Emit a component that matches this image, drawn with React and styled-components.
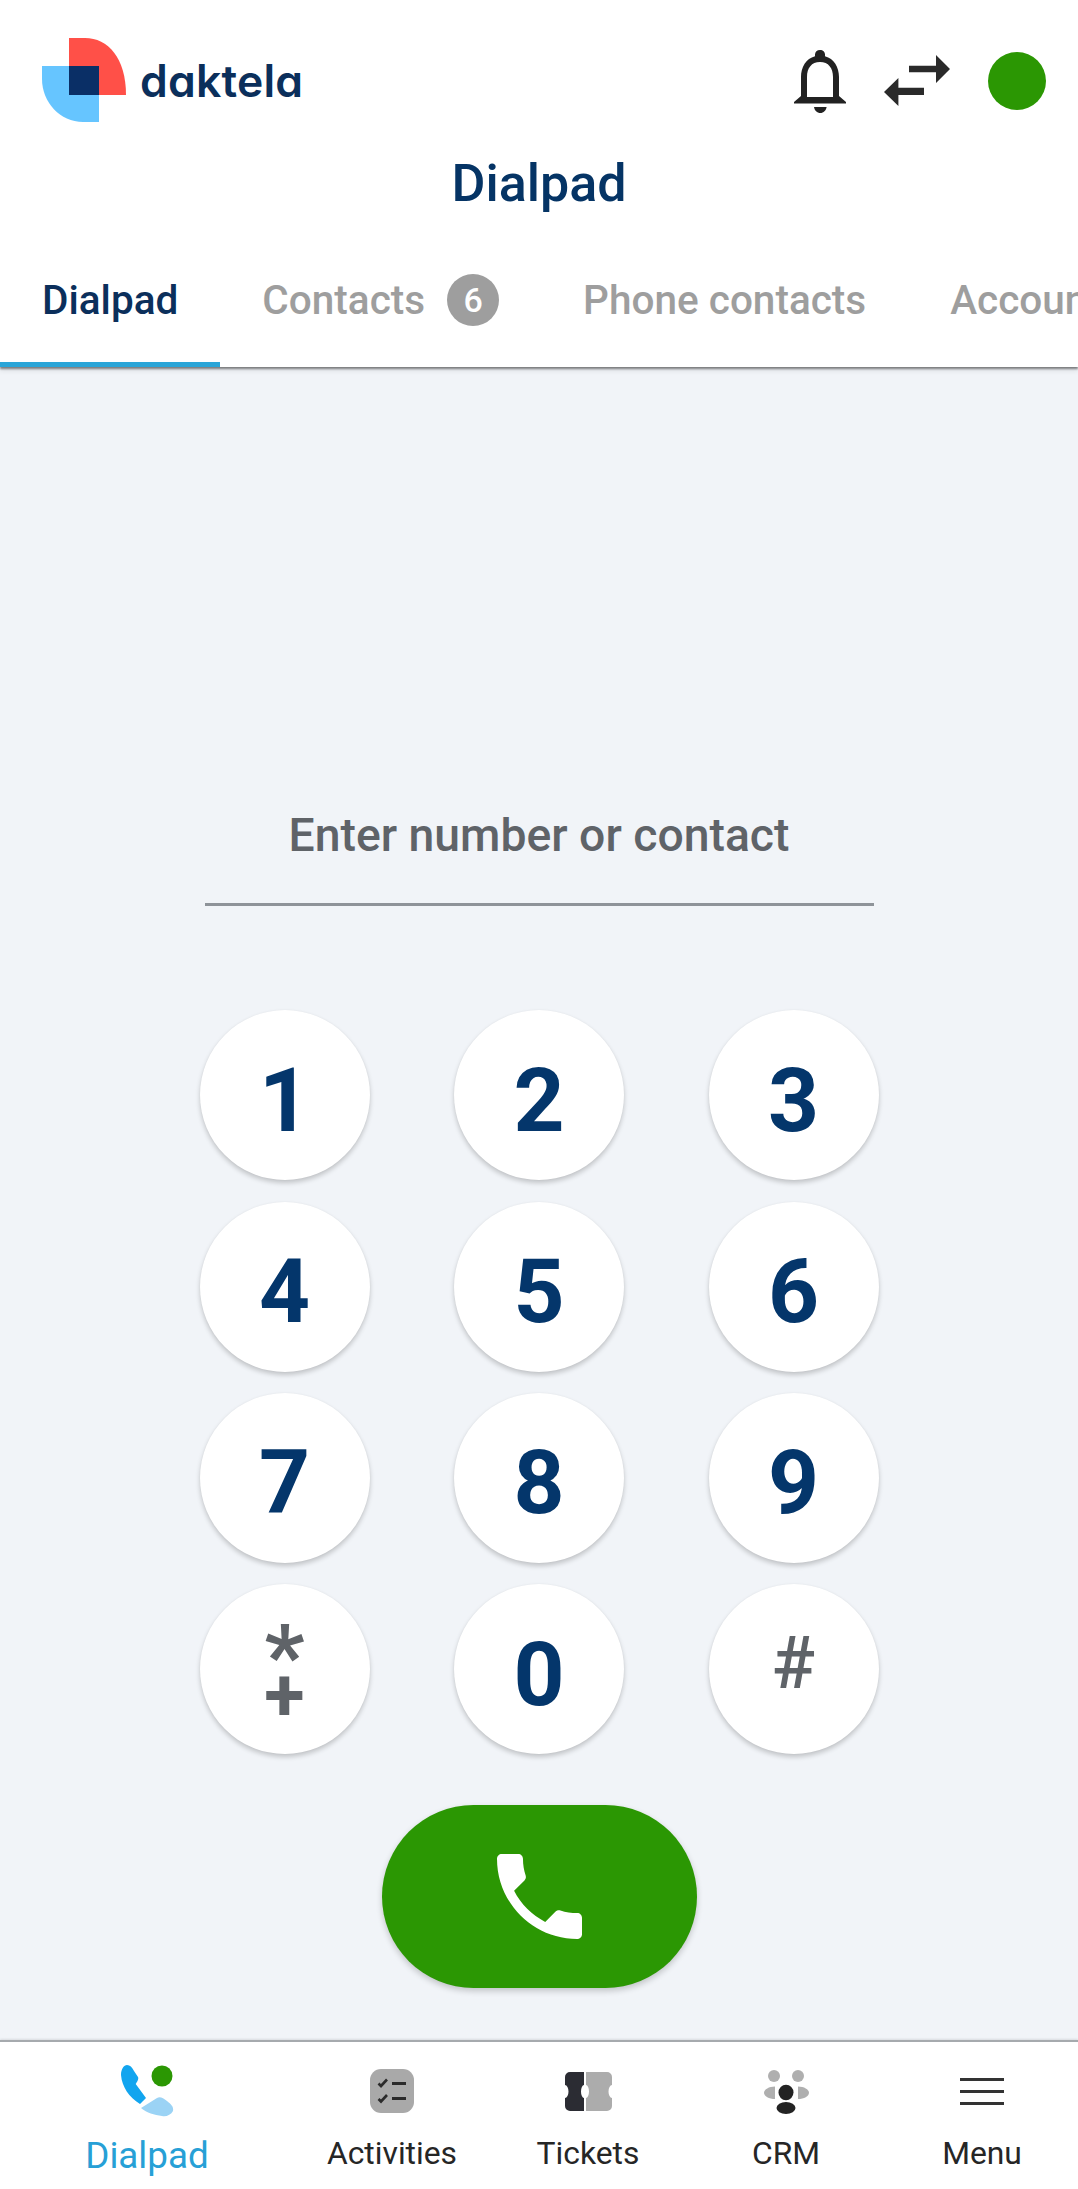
import React from "react";
import styled, { createGlobalStyle } from "styled-components";

const Global = createGlobalStyle`
  html, body { margin: 0; padding: 0; background: #fff; }
  * { box-sizing: border-box; }
`;

const Page = styled.div`
  width: 1078px;
  height: 2189px;
  display: flex;
  flex-direction: column;
  overflow: hidden;
  background: #fff;
  font-family: Roboto, "Liberation Sans", sans-serif;
`;
const Header = styled.header`
  height: 156px;
  padding: 38px 32px 0 42px;
  display: flex;
  justify-content: space-between;
  align-items: flex-start;
`;
const Brand = styled.div`
  display: flex;
  align-items: flex-start;
  gap: 14px;
`;
const Wordmark = styled.span`
  font-family: Inter, sans-serif;
  font-feature-settings: "cv11" 1;
  font-size: 44.5px;
  font-weight: 600;
  line-height: 42px;
  letter-spacing: 0.2px;
  margin-top: 22px;
  color: #0b2f5b;
`;
const Actions = styled.div`
  display: flex;
  align-items: flex-start;
  gap: 38px;
  padding-top: 12px;
`;
const IconSlot = styled.span`
  display: block;
  line-height: 0;
  margin-top: ${(p) => p.$top}px;
`;
const Status = styled.span`
  display: block;
  width: 58px;
  height: 58px;
  border-radius: 50%;
  background: #2b9703;
  margin-top: 2px;
`;
const Title = styled.h1`
  margin: 0;
  height: 68px;
  position: relative;
  z-index: 2;
  background: #fff;
  font-size: 52px;
  line-height: 56px;
  font-weight: 500;
  text-align: center;
  color: #053465;
`;
const Tabs = styled.nav`
  height: 143px;
  display: flex;
  align-items: stretch;
  overflow: hidden;
  background: #fff;
  position: relative;
  z-index: 1;
  box-shadow: 0 2px 2px rgba(0, 0, 0, 0.45), 0 4px 5px rgba(0, 0, 0, 0.08);
`;
const Tab = styled.div`
  flex: none;
  padding: 14px 42px 0;
  display: flex;
  align-items: center;
  gap: 22px;
  height: 100%;
  font-size: 40.5px;
  font-weight: 500;
  color: ${(p) => (p.$active ? "#0b2f5b" : "#9e9e9e")};
  border-bottom: 5px solid ${(p) => (p.$active ? "#2aa5d8" : "transparent")};
  white-space: nowrap;
`;
const Badge = styled.span`
  width: 52px;
  height: 52px;
  border-radius: 50%;
  background: #9e9e9e;
  color: #fff;
  font-size: 34px;
  font-weight: 500;
  display: flex;
  align-items: center;
  justify-content: center;
`;
const Main = styled.main`
  flex: 1;
  background: #f1f4f8;
  display: flex;
  flex-direction: column;
  align-items: center;
  justify-content: flex-end;
  padding-bottom: 52px;
`;
const NumberField = styled.div`
  width: 669px;
  height: 106px;
  margin-bottom: 104px;
  border-bottom: 3px solid #8e9399;
  color: #5f6368;
  font-size: 46.3px;
  font-weight: 500;
  text-align: center;
  line-height: 70px;
`;
const Keypad = styled.div`
  display: grid;
  grid-template-columns: repeat(3, 170px);
  grid-auto-rows: 170.8px;
  column-gap: 84.5px;
  row-gap: 20.5px;
`;
const Key = styled.button`
  width: 170px;
  height: 170px;
  padding: 10px 0 0;
  border: 0;
  border-radius: 50%;
  background: #fff;
  box-shadow: 0 3px 5px rgba(0, 0, 0, 0.2), 0 0 2px rgba(0, 0, 0, 0.04);
  font-family: inherit;
  font-size: 89px;
  line-height: 1;
  font-weight: 700;
  color: #04366b;
`;
const HashKey = styled(Key)`
  font-size: 72px;
  font-weight: 500;
  color: #5f6368;
  padding: 0 0 10px;
`;
const StarKey = styled(Key)`
  padding-top: 12px;
  color: #5f6368;
`;
const StarGlyphs = styled.span`
  display: block;
  font-size: 74px;
  line-height: 39px;
  white-space: pre-line;
  &::first-line {
    font-size: 88px;
  }
`;
const CallButton = styled.button`
  width: 315px;
  height: 183px;
  margin-top: 50px;
  border: 0;
  border-radius: 92px;
  background: #2b9703;
  box-shadow: 0 3px 6px rgba(0, 0, 0, 0.2);
  display: flex;
  align-items: center;
  justify-content: center;
`;
const BottomNav = styled.nav`
  height: 149px;
  position: relative;
  z-index: 1;
  background: #fff;
  border-top: 2px solid #a6aaae;
  box-shadow: 0 -1px 2px rgba(0, 0, 0, 0.1);
  display: grid;
  grid-template-columns: 294px 196px 196px 200px 192px;
  padding-top: 19px;
`;
const NavItem = styled.div`
  display: flex;
  flex-direction: column;
  align-items: center;
  color: ${(p) => (p.$active ? "#27a0d6" : "#262626")};
  font-size: ${(p) => (p.$active ? 36.8 : 31.8)}px;
`;
const NavIcon = styled.div`
  height: 60px;
  display: flex;
  align-items: center;
  justify-content: center;
`;
const NavLabel = styled.span`
  margin-top: ${(p) => (p.$active ? 14 : 11)}px;
  line-height: 42px;
  white-space: nowrap;
`;

const Logo = () => (
  <svg width="84" height="84" viewBox="0 0 84 84" aria-hidden="true">
    <path d="M27 0H43C66 0 84 20 84 57H27Z" fill="#ff5048" />
    <path d="M0 28H57V84H41C18 84 0 64 0 41Z" fill="#66c5ff" />
    <rect x="27" y="28" width="30" height="29" fill="#0a2f66" />
  </svg>
);
const Bell = () => (
  <svg width="52" height="63" viewBox="0 0 52 63" aria-hidden="true">
    <path
      fill="#222"
      fillRule="evenodd"
      d="M26 0c3 0 5 2 5 4.600v1.600C40 8.600 45 17 45 27v19l7 6v1.500H0V52l7-6V27C7 17 12 8.600 21 6.200V4.600C21 2 23 0 26 0zM13 47h26V27c0-9-4.500-15-13-15s-13 6-13 15z"
    />
    <path fill="#222" d="M20 57h12.600C32 60.500 29.500 63 26.300 63S20.500 60.500 20 57z" />
  </svg>
);
const Swap = () => (
  <svg width="66" height="51" viewBox="0 0 66 51" aria-hidden="true">
    <path fill="#2a2a2a" d="M25 10.700h27V0l14 14-14 14V17.300H25z" />
    <path fill="#2a2a2a" d="M40 32.700H14.400V23L0 37l14.400 14V40H40z" />
  </svg>
);
const Phone = () => (
  <svg width="85" height="85" viewBox="3 3 18 18" aria-hidden="true">
    <path
      fill="#fff"
      d="M6.620 10.790c1.440 2.830 3.760 5.140 6.590 6.590l2.200-2.200c.27-.27.67-.36 1.020-.24 1.120.37 2.330.57 3.570.57.55 0 1 .45 1 1V20c0 .55-.45 1-1 1-9.390 0-17-7.610-17-17 0-.55.45-1 1-1h3.500c.55 0 1 .45 1 1 0 1.250.2 2.450.57 3.570.11.35.03.74-.25 1.020l-2.200 2.200z"
    />
  </svg>
);
const DialpadIcon = () => (
  <svg width="60" height="60" viewBox="0 0 60 60" aria-hidden="true">
    <path
      fill="#12a5ef"
      d="M4 14C4 8 7 4 10 4c3 0 5 2 7 6l4 6c1 2-1 5-2.300 7L29 37l-6 6C12 36 5 26 4 14z"
    />
    <path
      fill="#9bd3f5"
      d="M24 47l16-10c3-2 6 0 10 3 4 3 7 6 6 10-2 4-7 6-11 5-8-1-15-3-21-8z"
    />
    <circle cx="45" cy="15" r="10.500" fill="#2b9703" />
  </svg>
);
const ActivitiesIcon = () => (
  <svg width="44" height="44" viewBox="0 0 44 44" aria-hidden="true">
    <rect width="44" height="44" rx="11" fill="#a9a9a9" />
    <path
      d="M8.500 14.500l2.500 2.500 6-6.500M8.500 30l2.500 2.500 6-6.500"
      fill="none"
      stroke="#2b2b2b"
      strokeWidth="2.600"
    />
    <path d="M22 14.500h14M22 29.500h14" fill="none" stroke="#2b2b2b" strokeWidth="3" />
  </svg>
);
const TicketsIcon = () => (
  <svg width="47" height="39" viewBox="0 0 47 39" aria-hidden="true">
    <path
      fill="#2b2c33"
      d="M5 0H19V13A3 6.500 0 0 0 19 26V39H5A5 5 0 0 1 0 34V26A3.500 6.500 0 0 0 0 13V5A5 5 0 0 1 5 0Z"
    />
    <path
      fill="#acacac"
      d="M21 0H42A5 5 0 0 1 47 5V13A3.500 6.500 0 0 0 47 26V34A5 5 0 0 1 42 39H21V26A3 6.500 0 0 0 21 13Z"
    />
  </svg>
);
const CrmIcon = () => (
  <svg width="45" height="45" viewBox="0 0 45 45" aria-hidden="true">
    <circle cx="10" cy="7" r="6" fill="#afafaf" />
    <circle cx="34" cy="7" r="6" fill="#afafaf" />
    <path fill="#afafaf" d="M11 17.500V30C5 30 0 27 0 23.700 0 20.500 5 17.500 11 17.500z" />
    <path fill="#afafaf" d="M34 17.500V30c6 0 11-3 11-6.300 0-3.200-5-6.200-11-6.200z" />
    <ellipse cx="22" cy="23.500" rx="7.500" ry="7.800" fill="#232323" />
    <ellipse cx="22" cy="39" rx="9.500" ry="6" fill="#232323" />
  </svg>
);
const MenuIcon = () => (
  <svg width="44" height="27" viewBox="0 0 44 27" aria-hidden="true">
    <path d="M0 1.500h44M0 13.500h44M0 25.500h44" fill="none" stroke="#333" strokeWidth="3.200" />
  </svg>
);

const digits = ["1", "2", "3", "4", "5", "6", "7", "8", "9"];

export default function App() {
  return (
    <Page>
      <Global />
      <Header>
        <Brand>
          <Logo />
          <Wordmark>daktela</Wordmark>
        </Brand>
        <Actions>
          <IconSlot $top={0}>
            <Bell />
          </IconSlot>
          <IconSlot $top={5}>
            <Swap />
          </IconSlot>
          <Status />
        </Actions>
      </Header>
      <Title>Dialpad</Title>
      <Tabs>
        <Tab $active>Dialpad</Tab>
        <Tab>
          Contacts <Badge>6</Badge>
        </Tab>
        <Tab>Phone contacts</Tab>
        <Tab>Accounts</Tab>
      </Tabs>
      <Main>
        <NumberField>Enter number or contact</NumberField>
        <Keypad>
          {digits.map((d) => (
            <Key key={d}>{d}</Key>
          ))}
          <StarKey>
            <StarGlyphs>{"*\n+"}</StarGlyphs>
          </StarKey>
          <Key>0</Key>
          <HashKey>#</HashKey>
        </Keypad>
        <CallButton aria-label="Call">
          <Phone />
        </CallButton>
      </Main>
      <BottomNav>
        <NavItem $active>
          <NavIcon>
            <DialpadIcon />
          </NavIcon>
          <NavLabel $active>Dialpad</NavLabel>
        </NavItem>
        <NavItem>
          <NavIcon>
            <ActivitiesIcon />
          </NavIcon>
          <NavLabel>Activities</NavLabel>
        </NavItem>
        <NavItem>
          <NavIcon>
            <TicketsIcon />
          </NavIcon>
          <NavLabel>Tickets</NavLabel>
        </NavItem>
        <NavItem>
          <NavIcon>
            <CrmIcon />
          </NavIcon>
          <NavLabel>CRM</NavLabel>
        </NavItem>
        <NavItem>
          <NavIcon>
            <MenuIcon />
          </NavIcon>
          <NavLabel>Menu</NavLabel>
        </NavItem>
      </BottomNav>
    </Page>
  );
}
